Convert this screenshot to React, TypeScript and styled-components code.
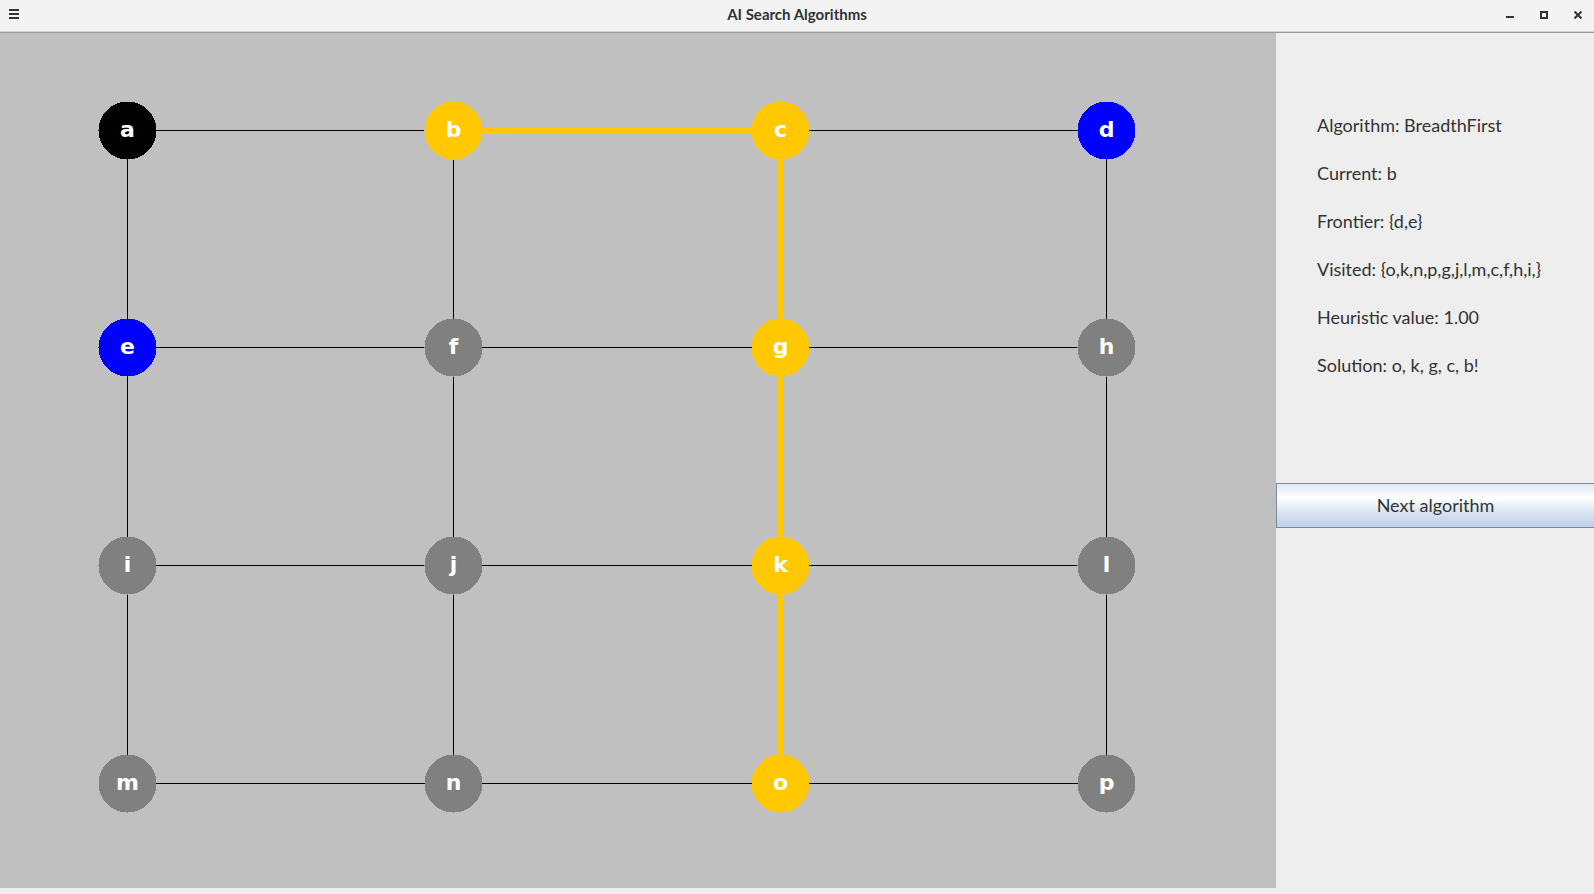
import React from "react";
import styled, { createGlobalStyle } from "styled-components";

const GlobalStyle = createGlobalStyle`
  html, body {
    margin: 0;
    padding: 0;
    overflow: hidden;
    background: #eeeeee;
  }
  * { box-sizing: border-box; }
`;

const Window = styled.div`
  width: 1594px;
  height: 894px;
  display: flex;
  flex-direction: column;
  background: #eeeeee;
  font-family: Lato, "Noto Sans", sans-serif;
`;

const TitleBar = styled.header`
  height: 33px;
  flex: none;
  display: grid;
  grid-template-columns: 1fr auto 1fr;
  align-items: center;
  background: #f3f3f3;
  border-bottom: 1px solid #9b9b96;
  box-shadow: inset 0 -1px 0 #d6d6d6;
  padding-bottom: 4px;
  color: #2e3436;
`;

const MenuButton = styled.div`
  justify-self: start;
  display: flex;
  padding-left: 9px;
`;

const Title = styled.h1`
  margin: 0;
  font-size: 15px;
  font-weight: 700;
  line-height: 18px;
  color: #2e3436;
`;

const Controls = styled.div`
  justify-self: end;
  display: flex;
  align-items: center;
  gap: 26px;
  padding-right: 12px;
  padding-top: 1px;
`;

const Body = styled.main`
  flex: 1;
  display: flex;
  min-height: 0;
`;

const CanvasColumn = styled.section`
  width: 1276px;
  flex: none;
  display: flex;
  flex-direction: column;
`;

const GraphCanvas = styled.svg`
  display: block;
  width: 1276px;
  height: 855px;
  background: #c0c0c0;
`;

const SidePanel = styled.aside`
  flex: 1;
  display: flex;
  flex-direction: column;
  padding-top: 68px;
  background: #eeeeee;
`;

const InfoLine = styled.div`
  height: 48px;
  line-height: 48px;
  padding-left: 41px;
  font-size: 18px;
  color: #333333;
  white-space: nowrap;
`;

const NextButton = styled.button`
  margin-top: 94px;
  height: 45px;
  width: 100%;
  border: 1px solid #7a8a9b;
  border-right: none;
  background: linear-gradient(
    to bottom,
    #dde8f4 0%,
    #ffffff 32%,
    #dbe6f2 62%,
    #bdd1e8 100%
  );
  font-family: Lato, "Noto Sans", sans-serif;
  font-size: 18px;
  color: #333333;
  padding: 0 0 1px 0;
  cursor: pointer;
`;

type NodeColor = "black" | "yellow" | "blue" | "gray";

const COLORS: Record<NodeColor, string> = {
  black: "#000000",
  yellow: "#ffc800",
  blue: "#0000ff",
  gray: "#808080",
};

const labels = [
  ["a", "b", "c", "d"],
  ["e", "f", "g", "h"],
  ["i", "j", "k", "l"],
  ["m", "n", "o", "p"],
];

const colorOf: Record<string, NodeColor> = {
  a: "black",
  b: "yellow",
  c: "yellow",
  d: "blue",
  e: "blue",
  f: "gray",
  g: "yellow",
  h: "gray",
  i: "gray",
  j: "gray",
  k: "yellow",
  l: "gray",
  m: "gray",
  n: "gray",
  o: "yellow",
  p: "gray",
};

const colX = [127.5, 453.5, 780.5, 1106.5];
const rowY = [97.5, 314.5, 532.5, 750.5];

const pos: Record<string, { x: number; y: number }> = {};
labels.forEach((row, r) =>
  row.forEach((l, c) => {
    pos[l] = { x: colX[c], y: rowY[r] };
  })
);

const edges: [string, string][] = [];
for (let r = 0; r < 4; r++) {
  for (let c = 0; c < 4; c++) {
    if (c < 3) edges.push([labels[r][c], labels[r][c + 1]]);
    if (r < 3) edges.push([labels[r][c], labels[r + 1][c]]);
  }
}

const path: [string, string][] = [
  ["b", "c"],
  ["c", "g"],
  ["g", "k"],
  ["k", "o"],
];

const MenuIcon = () => (
  <svg width="10" height="10" viewBox="0 0 10 10">
    <rect x="0" y="0" width="10" height="2" fill="#2e3436" />
    <rect x="0" y="4" width="10" height="2" fill="#2e3436" />
    <rect x="0" y="8" width="10" height="2" fill="#2e3436" />
  </svg>
);

const MinIcon = () => (
  <svg width="8" height="8" viewBox="0 0 8 8">
    <rect x="0" y="5" width="8" height="2" fill="#2e3436" />
  </svg>
);

const MaxIcon = () => (
  <svg width="8" height="8" viewBox="0 0 8 8">
    <rect x="1" y="1" width="6" height="6" fill="none" stroke="#2e3436" strokeWidth="2" />
  </svg>
);

const CloseIcon = () => (
  <svg width="8" height="8" viewBox="0 0 8 8">
    <path d="M0.5 0.5 L7.5 7.5 M7.5 0.5 L0.5 7.5" stroke="#2e3436" strokeWidth="2" />
  </svg>
);

const Graph = () => (
  <GraphCanvas viewBox="0 0 1276 855">
    {edges.map(([a, b]) => (
      <line
        key={a + b}
        x1={pos[a].x}
        y1={pos[a].y}
        x2={pos[b].x}
        y2={pos[b].y}
        stroke="#000"
        strokeWidth={1}
        shapeRendering="crispEdges"
      />
    ))}
    {path.map(([a, b]) => (
      <line
        key={"p" + a + b}
        x1={pos[a].x}
        y1={pos[a].y}
        x2={pos[b].x}
        y2={pos[b].y}
        stroke="#ffc800"
        strokeWidth={6}
        shapeRendering="crispEdges"
      />
    ))}
    {labels.flat().map((l) => (
      <g key={l}>
        <circle
          cx={pos[l].x}
          cy={pos[l].y}
          r={29}
          fill={COLORS[colorOf[l]]}
          shapeRendering="crispEdges"
        />
        <text
          x={pos[l].x}
          y={pos[l].y + 6}
          textAnchor="middle"
          fill="#ffffff"
          fontFamily='"DejaVu Sans", sans-serif'
          fontWeight="bold"
          fontSize="22"
        >
          {l}
        </text>
      </g>
    ))}
  </GraphCanvas>
);

export default function App() {
  return (
    <>
      <GlobalStyle />
      <Window>
        <TitleBar>
          <MenuButton>
            <MenuIcon />
          </MenuButton>
          <Title>AI Search Algorithms</Title>
          <Controls>
            <MinIcon />
            <MaxIcon />
            <CloseIcon />
          </Controls>
        </TitleBar>
        <Body>
          <CanvasColumn>
            <Graph />
          </CanvasColumn>
          <SidePanel>
            <InfoLine>Algorithm: BreadthFirst</InfoLine>
            <InfoLine>Current: b</InfoLine>
            <InfoLine>Frontier: {"{d,e}"}</InfoLine>
            <InfoLine>Visited: {"{o,k,n,p,g,j,l,m,c,f,h,i,}"}</InfoLine>
            <InfoLine>Heuristic value: 1.00</InfoLine>
            <InfoLine>Solution: o, k, g, c, b!</InfoLine>
            <NextButton>Next algorithm</NextButton>
          </SidePanel>
        </Body>
      </Window>
    </>
  );
}
